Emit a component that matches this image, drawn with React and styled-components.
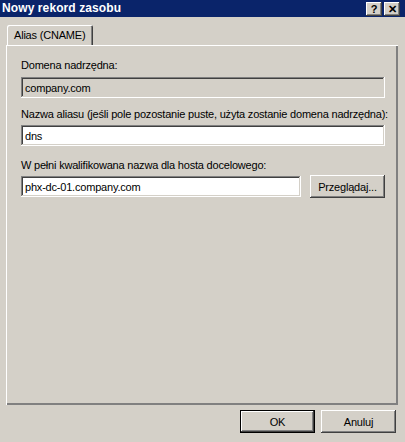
import React from 'react';
import styled, { createGlobalStyle } from 'styled-components';

const GlobalStyle = createGlobalStyle`
  *, *::before, *::after {
    box-sizing: border-box;
  }
  html, body {
    margin: 0;
    padding: 0;
    background: #d4d0c8;
  }
  body {
    font-family: "Liberation Sans", Arial, sans-serif;
    font-size: 11px;
    letter-spacing: -0.2px;
    color: #000;
  }
`;

const raised = `
  box-shadow: inset -1px -1px #404040, inset 1px 1px #fff,
    inset -2px -2px #808080, inset 2px 2px #d4d0c8;
`;

const sunken = `
  box-shadow: inset -1px -1px #fff, inset 1px 1px #808080,
    inset -2px -2px #d4d0c8, inset 2px 2px #404040;
`;

const Dialog = styled.div`
  width: 405px;
  height: 442px;
  background: #d4d0c8;
  display: flex;
  flex-direction: column;
  overflow: hidden;
`;

const TitleBar = styled.div`
  height: 17px;
  flex-shrink: 0;
  background: #0a246a;
  display: flex;
  align-items: center;
  padding: 0 5px 0 2px;
`;

const Title = styled.span`
  flex: 1;
  color: #fff;
  font-weight: bold;
  font-size: 12px;
  letter-spacing: 0.1px;
  line-height: 17px;
`;

const CaptionButton = styled.div`
  width: 16px;
  height: 14px;
  background: #d4d0c8;
  ${raised}
  display: flex;
  align-items: center;
  justify-content: center;
  margin-left: ${(p) => (p.$gap ? '2px' : '0')};
  font-weight: bold;
  font-size: 11px;
  line-height: 14px;
  color: #000;
`;

const Body = styled.div`
  flex: 1;
  display: flex;
  flex-direction: column;
  padding: 8px 7px 0 6px;
`;

const TabStrip = styled.div`
  display: flex;
  padding-left: 1px;
  height: 20px;
`;

const Tab = styled.div`
  height: 20px;
  padding: 0 8px 0 7px;
  display: flex;
  align-items: center;
  background: #d4d0c8;
  border-radius: 2px 2px 0 0;
  box-shadow: inset 1px 1px #fff, inset -1px 0 #404040, inset -2px 0 #808080;
`;

const Panel = styled.div`
  height: 360px;
  flex-shrink: 0;
  box-shadow: inset 1px 1px #fff, inset -1px -1px #808080, inset -2px -2px #808080;
  padding: 14px 13px 0 15px;
  display: flex;
  flex-direction: column;
`;

const Label = styled.div`
  height: 13px;
  line-height: 13px;
  white-space: nowrap;
  margin-bottom: ${(p) => p.$mb}px;
`;

const Group = styled.div`
  margin-bottom: ${(p) => p.$mb || 0}px;
`;

const Row = styled.div`
  display: flex;
  align-items: center;
  gap: 9px;
`;

const Field = styled.div`
  height: 21px;
  flex: 1;
  background: ${(p) => (p.$disabled ? '#d4d0c8' : '#fff')};
  ${sunken}
  padding: 0 4px;
  display: flex;
  align-items: center;
`;

const Button = styled.div`
  width: 75px;
  height: 23px;
  flex-shrink: 0;
  background: #d4d0c8;
  ${raised}
  display: flex;
  align-items: center;
  justify-content: center;
  ${(p) => p.$default && `
    box-shadow: inset 0 0 0 1px #000, inset -2px -2px #404040, inset 2px 2px #fff,
      inset -3px -3px #808080, inset 3px 3px #d4d0c8;
  `}
`;

const Footer = styled.div`
  display: flex;
  justify-content: flex-end;
  gap: 6px;
  padding: 5px 2px 0 0;
`;

const App = () => (
  <Dialog>
    <GlobalStyle />
    <TitleBar>
      <Title>Nowy rekord zasobu</Title>
      <CaptionButton>?</CaptionButton>
      <CaptionButton $gap>✕</CaptionButton>
    </TitleBar>
    <Body>
      <TabStrip>
        <Tab>Alias (CNAME)</Tab>
      </TabStrip>
      <Panel>
        <Group $mb={10}>
          <Label $mb={5}>Domena nadrzędna:</Label>
          <Row>
            <Field $disabled>company.com</Field>
          </Row>
        </Group>
        <Group $mb={13}>
          <Label $mb={4}>Nazwa aliasu (jeśli pole pozostanie puste, użyta zostanie domena nadrzędna):</Label>
          <Row>
            <Field>dns</Field>
          </Row>
        </Group>
        <Group>
          <Label $mb={3}>W pełni kwalifikowana nazwa dla hosta docelowego:</Label>
          <Row>
            <Field>phx-dc-01.company.com</Field>
            <Button>Przeglądaj...</Button>
          </Row>
        </Group>
      </Panel>
      <Footer>
        <Button $default>OK</Button>
        <Button>Anuluj</Button>
      </Footer>
    </Body>
  </Dialog>
);

export default App;
